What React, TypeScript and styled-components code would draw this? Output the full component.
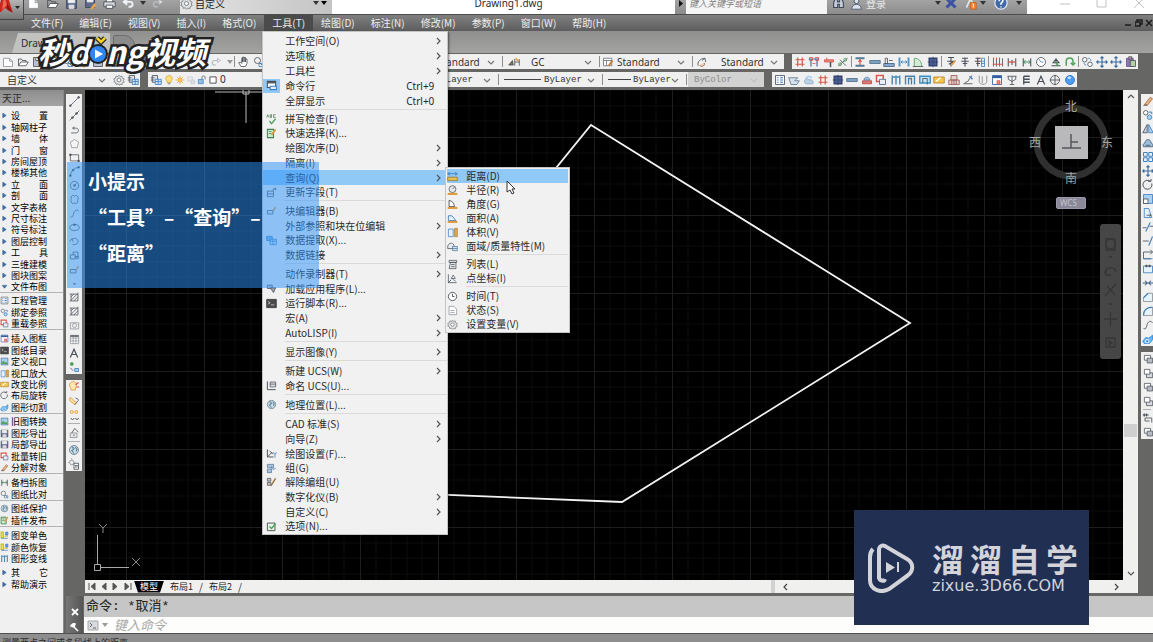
import React from "react";
import styled, { createGlobalStyle, css } from "styled-components";

const sans = `"Noto Sans", "Noto Sans CJK SC", sans-serif`;
const cjk = `"Noto Sans CJK SC", sans-serif`;
const mono = `"Liberation Mono", "Noto Sans CJK SC", monospace`;

const GlobalStyle = createGlobalStyle`
  * { box-sizing: border-box; }
  body { margin: 0; overflow: hidden; background: #666664; font-family: ${cjk}; font-size: 10px; color: #2c2c2c; }
  button, input, select { font: inherit; color: inherit; margin: 0; padding: 0; border: 0; background: none; border-radius: 0; outline: 0; }
  ul { list-style: none; margin: 0; padding: 0; }
  svg { display: block; }
`;

/* ---------- icons ---------- */

type Stroke = [d: string, stroke: string, fill?: string, width?: number];

const K = "#4a5058";
const G = "#8b9096";
const R = "#d8564c";
const B = "#3f7fc0";
const L = "#a9d0f0";
const O = "#e09a3e";
const N = "#4fa05a";

const glyphs: Record<string, Stroke[]> = {
  newDoc: [["M2 3h8l4 4v7H2z", G, "#fff"], ["M10 3v4h4", G]],
  open: [["M2 13V4h4l1 2h5v2", K], ["M2 13l3-5h10l-3 5z", K, "#fff"]],
  save: [["M2 2h12v12H2z", "#39415c", "#5c6a90"], ["M4 2h8v5H4z", "#eee", "#eee"], ["M5 10h6v4H5z", "#ddd", "#ddd"]],
  saveAs: [["M2 2h11v11H2z", "#39415c", "#5c6a90"], ["M4 2h7v4H4z", "#eee", "#eee"], ["M8 14l5-6 2 2-5 5z", O, "#f2b25c"]],
  print: [["M4 6V2h8v4", K, "#fff"], ["M1 6h14v6H1z", K, "#d8dbe0"], ["M4 10h8v4H4z", K, "#fff"]],
  undo: [["M2 6h8c4 0 4 6 0 6H8", "#eef1f6", undefined, 2.4], ["M6 2L1 6l5 4z", "#eef1f6", "#eef1f6"]],
  redo: [["M14 6H6c-4 0-4 6 0 6h2", "#b8bcc2", undefined, 1.6], ["M10 3l4 3-4 3z", "#b8bcc2", "#e4e6e8"]],
  gear: [["M8 1.5l1.5 2 2.5-.7.6 2.6 2.4 1-1.2 2.2 1.2 2.2-2.4 1-.6 2.6-2.5-.7L8 15l-1.5-1.800-2.500.7-.6-2.600-2.400-1L2.200 8.600 1 6.400l2.400-1L4 2.800l2.500.7z", "#7b7f84", "#e2e3e4"], ["M5.500 8a2.500 2.500 0 105 0 2.500 2.500 0 10-5 0", "#70757a", "#fff"]],
  hand: [["M4 14l-3-5 2-1 2 2V3h1v5V1.500h2V8V2h2v6V4h2v6l-2 4z", K, "#fff"]],
  zoomWin: [["M2 6a4 4 0 108 0 4 4 0 10-8 0M9 9l5 5", K], ["M8 10h6v4H8z", B]],
  floppy: [["M2 2h12v12H2z", K, "#b6bfd0"], ["M5 2h6v4H5z", K, "#fff"]],
  bulb: [["M5 10C1 6 3 1 8 1s7 5 3 9v2H5z", "#c99b22", "#ffe07a"], ["M6 14h4", K]],
  sun: [["M4.500 8a3.500 3.500 0 107 0 3.500 3.500 0 10-7 0", "#e0a030", "#ffc650"], ["M8 1v2M8 13v2M1 8h2M13 8h2M3 3l1.500 1.500M11.500 11.500L13 13M13 3l-1.500 1.500M3 13l1.500-1.500", "#d9962a"]],
  freeze: [["M3 3h7v7H3z", "#c3c8cc", "#e8ebee"], ["M8 8h6v6H8z", "#c3c8cc", "#dadde0"]],
  lock: [["M2 7h8v7H2z", B, "#8fbce4"], ["M8 7V3c0-2 5-2 5 0v4", K]],
  swatch: [["M3 3h10v10H3z", K, "#fff", 1.500]],
  layers: [["M3 2h7v9H3zM1 5h5M1 8h5", K, "#dfe5ee"], ["M7 7h8v7H7zM7 10h8M11 7v7", B, "#cfe2f5"]],
  dimStyle: [["M1 12l5-6 1 6zM9 4v9M15 4v9M9 8h6", K, "#8a6a4a"], ["M10 3l4 4", O, undefined, 2]],
  tableStyle: [["M2 3h11v10H2zM2 6h11M6 6v7", "#6d727a", "#fff"], ["M9 13l5-7", "#c47a35", undefined, 2.500]],
  leader: [["M3 13c-2-5 3-10 9-10M8 6l4-3 1 5", K], ["M5 12a3 3 0 106-3", "#a5653a", "#f1d1b8"]],
  grid: [["M5 2v12M11 2v12M2 5h12M2 11h12", R, undefined, 1.600]],
  gridT: [["M4 4v10M12 4v10M1 4h14", "#4c6f98", undefined, 1.600], ["M2 2h4v4H2zM10 2h4v4h-4zM6 10h4", R]],
  tBeam: [["M2 5h12v3H2z", R, "#e58b84"], ["M10 8v7", K, undefined, 2], ["M5 2v4", R]],
  axes: [["M2 13L14 3M4 5l8 8", K], ["M2 11a2 2 0 104 0 2 2 0 10-4 0M9 5a2 2 0 104 0 2 2 0 10-4 0", N]],
  iBeam: [["M2 3h12M2 13h12", "#4f7b96", undefined, 2.500], ["M8 4v8M6 8l2-3 2 3", R, undefined, 1.600]],
  wall: [["M1 6h14v4H1z", "#50708e", "#7da0bf"]],
  wallL: [["M1 10h14v4H1z", "#40638a", "#86a9cb"], ["M3 3h3v7H3zM8 6h5", K]],
  wallH: [["M2 2v12M14 2v12", "#4e94c0", "#fff", 2.500], ["M4 8h8M6 6L4 8l2 2M10 6l2 2-2 2", B]],
  arcDoor: [["M3 14V3c6 0 10 4 10 11", N, "#d3ead6"], ["M1 14h14", K]],
  column: [["M3 3h10v10H3z", "#35446e", "#4a5f96", 2], ["M8 1v14M1 8h14", "#35446e"]],
  textA: [["M4 2h8M8 2v12M3 7h10M5 11l6-3", K, undefined, 1.400], ["M9 12l5-6", O, undefined, 2]],
  textB: [["M4 3h8M8 2v12M3 7h10M5 10h6", K, undefined, 1.500]],
  textC: [["M2 3h7M5 2v12M1 7h8M3 10h5", K, undefined, 1.500], ["M10 3h4v11h-4zM10 7h4M10 10h4", B]],
  dimIcon: [["M2 3v11M6 3v11M10 3v11M14 3v11", K], ["M1 11h14M2 2v3M6 2v3M10 2v3", R, undefined, 1.500]],
  dimIconB: [["M3 3v11M13 3v11M8 5v7", K, undefined, 1.400], ["M3 8h10", R, undefined, 1.800]],
  dimIconC: [["M3 3v11M13 3v11", K, undefined, 1.400], ["M3 8h10M6 6l-3 2 3 2M10 6l3 2-3 2", "#40815a", undefined, 1.200]],
  dial: [["M2 8a6 6 0 1012 0 6 6 0 10-12 0", K, "#fff"], ["M8 8L5 4M8 8h3", B]],
  angle: [["M2 13h12M8 3v5M4 9l4-5 4 5z", K, "#c9d8e8", 1.400], ["M8 9l3 4", N, undefined, 2]],
  loop: [["M3 13V7c0-6 9-6 9 0v3M9 9l3 3 3-3", N, undefined, 2]],
  nodes: [["M2 5a3 3 0 106 0 3 3 0 10-6 0M9 11a3 3 0 106 0 3 3 0 10-6 0", K, "#fff"], ["M9 3c4 0 4 2 4 4M7 12C4 12 4 10 4 9", B]],
  move: [["M8 1v14M1 8h14M6 3l2-2 2 2M6 13l2 2 2-2M3 6L1 8l2 2M13 6l2 2-2 2", "#3d6d9e", undefined, 1.500]],
  paste: [["M2 3h9v11H2z", "#70539a", "#8b75ad"], ["M7 6h7v8H7z", K, "#b2d0a4"], ["M5 1h4v3H5z", K, "#caa"]],
  list: [["M2 2h12v12H2z", K, "#fff"], ["M4 5h2M8 5h4M4 8h2M8 8h4M4 11h2M8 11h4", B, undefined, 1.500]],
  roof: [["M1 5h12l-4 4h6l-3 5H4z", "#5b7895", "#d4e0ea"]],
  clouds: [["M2 10c0-4 5-5 6-2 4-1 7 2 5 5H5c-2 0-3-1-3-3z", "#88a9c4", "#bcd3e6"], ["M3 6l4-3 5 2", L, undefined, 2]],
  ball: [["M2 8a6 6 0 1012 0 6 6 0 10-12 0", "#2b6fc0", "#4d9df0"], ["M5 5c2-2 4-1 4 0s-3 2-4 0", "#d6ecff", "#d6ecff"]],
  redBox: [["M2 9h12v4H2z", "#c0463e", "#e07a72"], ["M4 8c0-5 7-5 8 0z", "#5f7fa8", "#a8c2de"]],
  redStack: [["M2 2h9v8H2z", R, "#fff", 2], ["M6 7h8v7H6z", "#4b5f85", "#e8edf6"]],
  bars: [["M3 2v12M8 2v12M13 2v12M3 4h10", "#4c8cb5", "#cfe4f1", 2]],
  frame: [["M2 14V3h12v11M6 14V6h4v8", "#4c7fa5", undefined, 1.800]],
  frameB: [["M1 3h14v9H1z", "#3a91c8", "#bfe2f5", 1.800], ["M5 12V6h6v8", K]],
  folderY: [["M1 4h14v8H1z", "#b08128", "#f7c64a"], ["M4 10l6-5", "#fff", undefined, 2]],
  balcony: [["M4 2h8v6H4zM1 8h14v6H1zM5 8v6M8 8v6M11 8v6", "#9a5a56", "#e6d2d0"]],
  steps: [["M2 13h12M4 13c0-4 4-1 5-5s3-2 4-6", K], ["M10 3l4 4", B, undefined, 2]],
  pen: [["M3 2v8c0 5 10 5 10 0V2M7 3v9", "#82868c"]],
  cal: [["M2 2h12v12H2z", "#2f5fa0", "#fff"], ["M2 4h12", "#2f5fa0", undefined, 3], ["M8 9h4v4H8z", R, "#e58b84"]],
  tree: [["M2 3h12M8 3v11M3 7l5 3 5-3M5 14h6M3 3v4M13 3v4", K]],
  para: [["M5 3h8M5 7h8M5 11h8M5 3v11", K, undefined, 1.800]],
  letterA: [["M3 14L8 3l5 11M5 10h6", K, undefined, 1.600]],
  target: [["M2 8a6 6 0 1012 0 6 6 0 10-12 0M8 1v14M1 8h14", K]],
  line: [["M2 14L14 2", K], ["M1 13h2v2H1zM13 1h2v2h-2z", K, K]],
  xline: [["M1 15L15 1", K], ["M4 10h2v2H4zM10 4h2v2h-2z", K, K]],
  pline: [["M3 13h7c5 0 5-7 0-7H6M8 4L5 6l3 2", K]],
  polygon: [["M8 2l6 4-2 8H4L2 6z", G, "#f4f4f4"]],
  rect: [["M2 4h12v9H2z", K], ["M1 3h2v2H1zM13 12h2v2h-2z", K, K]],
  arc: [["M2 14C3 7 7 3 14 2", K], ["M1 13h2v2H1zM13 1h2v2h-2zM5 5h2v2H5z", K, K]],
  circle: [["M2 8a6 6 0 1012 0 6 6 0 10-12 0M8 8l3-3", K], ["M7 7h2v2H7z", K, K]],
  cloud: [["M4 3c2-2 3 0 4 0s3-2 4 0 2 3 1 5 1 3-1 5-3 0-4 0-3 2-4 0-2-3-1-5-1-3 1-5z", K]],
  spline: [["M2 12c3 4 4-2 5-5s4-6 7-2", K]],
  ellipse: [["M1 8c0-6 14-6 14 0s-14 6-14 0", K], ["M7 3h2v2H7z", K, K]],
  earc: [["M4 5c5-4 10 0 9 4s-6 4-8 3M1 8l3-4 2 4", K]],
  block: [["M2 7h7v6H2zM6 7V3h7v7H9", K], ["M10 11a2 2 0 104 0 2 2 0 10-4 0", K]],
  dot: [["M7 8h2v1H7z", K, K]],
  hatch: [["M3 3h10v10H3zM3 7l4-4M3 12l9-9M7 13l6-6M1 3h2M1 13h2M13 1v2", K]],
  region: [["M2 4h12v9H2z", G, "#f2f2f2"], ["M5 8a3 3 0 106 0 3 3 0 10-6 0", G]],
  table: [["M2 2h12v12H2zM2 6h12M2 10h12M6 2v12M10 2v12", G, "#fff"], ["M2 3h12", K, undefined, 2]],
  mix: [["M3 4a2 2 0 104 0 2 2 0 10-4 0", N, N], ["M9 10h5v4H9z", B, L], ["M3 9l4 4", K]],
  bulbB: [["M4 10C0 5 3 1 7 1s6 4 3 8v3H4z", O, "#ffe7b0"], ["M10 5l4-3M11 8h4", R, undefined, 1.500]],
  bulbC: [["M3 3l8 7-2 3-7-6z", O, "#ffe0a0"], ["M9 13l5-6M10 4l4 2", K]],
  bulbD: [["M3 4a2 2 0 104 0 2 2 0 10-4 0M9 4a2 2 0 104 0 2 2 0 10-4 0", O, "#ffe7b0"], ["M4 12a2 2 0 104 0M10 12a2 2 0 104 0", K]],
  lockG: [["M3 8h9v6H3z", G, "#e6e6e6"], ["M5 8L9 2l5 5M8 10v2", K]],
  globe: [["M2 8a6 6 0 1012 0 6 6 0 10-12 0", "#637888", "#c8dde8"], ["M5 4c4 0 4 4 1 4s2 4 2 5M10 4l2 3-1 3", "#4a6a7c", "#8cb0c4"]],
  sunDoc: [["M2 6a3 3 0 106 0 3 3 0 10-6 0M5 0v2M0 6h1", G], ["M8 7h6v8H8zM9 10h4M9 12h4", K, "#fff"]],
  erase: [["M3 13l8-10 3 2-7 9z", "#a96b40", "#e7b184"], ["M2 14l5-1", K]],
  copy: [["M2 5a3 3 0 106 0 3 3 0 10-6 0", K, "#fff"], ["M7 11a3 3 0 106 0 3 3 0 10-6 0M9 4h4v3", B, L]],
  mirror: [["M7 2v11H1z", K, "#c4d3df"], ["M9 2v11h6z", B, L]],
  offset: [["M2 13c-2-4 2-5 2-5 0-6 8-6 8 0 0 0 4 1 2 5z", "#3f5a78", "#9ec0de"], ["M5 11h6", K]],
  array: [["M2 2h5v5H2zM9 2h5v5H9zM2 9h5v5H2zM9 9h5v5H9z", B, "#e5f2fc", 1.300]],
  rotate: [["M11 3a6 6 0 102 3M8 3h4V0", K, undefined, 1.300]],
  scale: [["M2 2h12v12H2z", B, L], ["M2 8h6v6H2z", K, "#fff"]],
  stretch: [["M3 2h6l4 12H3z", B, "#e4f2fc"], ["M6 11h6M10 9l2 2-2 2", K]],
  trim: [["M1 9h5M10 7h5", K], ["M5 14l6-12", B, undefined, 1.500]],
  extend: [["M1 8h8", K], ["M9 14l5-12", B, undefined, 1.500]],
  brk: [["M14 4H2v9h10M11 1l3 3-3 3", K], ["M2 13h12", B]],
  brk2: [["M6 4H2v9h12V4h-4", B, "#e4f2fc"], ["M5 3h2v2H5zM9 3h2v2H9z", K, K]],
  join: [["M1 8h14M4 5l3 3-3 3M12 5L9 8l3 3", "#3b5f82", undefined, 1.400]],
  chamfer: [["M2 14V9l6-6h6v11z", G, "#e4f2fc"], ["M2 9l6-6", B, undefined, 1.500]],
  fillet: [["M2 14c0-7 4-11 12-11v11z", G, "#e4f2fc"], ["M2 14c0-7 4-11 12-11", B, undefined, 1.500]],
  explode: [["M1 11l4-5 4 1 5-4v6l-4 5H3z", "#2e86d2", "#6fb6f0"], ["M5 9h4v4H5z", "#fff", "#2e86d2"]],
  order: [["M2 2h9v7H2z", K, "#fff"], ["M6 6h8v7H6z", K, "#b8bcc2"]],
  orderB: [["M5 7h9v7H5z", K, "#d5d8dc"], ["M2 2h8v7H2z", K, "#fff"]],
  dimOrder: [["M1 4h8M3 2v4M6 2v4", K, undefined, 1.600], ["M4 8h9v6M4 8v4h6", K]],
  cmd: [["M2 2h12v9H2z", K, "#fff", 1.500], ["M2 4h12", K, undefined, 2], ["M6 9h9v5H6z", B, "#e2effa", 1.500]],
  abc: [["M1 5l1.500-4L4 5M6 1v4h2V1zM14 1h-3v4h3", "#4c7c55"], ["M5 10l3 4 6-7", N, undefined, 2]],
  qsel: [["M2 2h9v12H2z", "#3f8050", "#cfe8d2", 1.500], ["M4 5h4M4 8h4", "#3f8050"], ["M8 10l6-8", O, undefined, 2.500]],
  field: [["M2 6h9v8H2zM2 10h9", K, "#e8edf2"], ["M9 5l5-3M11 2h3v3", K]],
  blockEd: [["M2 8h8v5H2z", K, "#e8edf2"], ["M10 9l4-6", O, undefined, 2]],
  extract: [["M1 2h8v6H1z", B, "#7db6e8"], ["M6 6h9v8H6zM6 9h9M10 6v8", B, "#d7eafa"]],
  app: [["M2 3h7v5H2z", K, "#c5cbd0"], ["M6 7h8l-3 7z", K, "#9aa0a6"]],
  script: [["M1 2h14v12H1z", "#333", "#4a4a4a"], ["M3 5l3 2-3 2M7 10h5", "#ddd"]],
  ucs: [["M2 2v12h12", K, undefined, 1.400], ["M6 3h8v7H6zM6 6h8", K, "#dfe3e8"]],
  drafting: [["M2 2v11h9M2 13l7-7M5 4l5 5", K, undefined, 1.400], ["M11 6a2 3 0 104 0M13 9v5", B]],
  group: [["M2 2h9v5H2zM2 9h6v5H2z", "#56779a", "#a9c4dc"], ["M8 5a3 3 0 106 2", B]],
  ungroup: [["M2 2h5v4H2zM2 8h5v4H2z", K, "#c6c6c6"], ["M7 13l7-11", "#9d7440", undefined, 2.200]],
  options: [["M2 3h11v11H2z", "#4d5a52", "#e7f2e8", 1.400], ["M5 8l3 3 6-7", N, undefined, 2]],
  dist: [["M1 9h14v5H1z", "#94752f", "#e7bd4d"], ["M2 4h12M4 2L1 4l3 2M12 2l3 2-3 2", B, undefined, 1.400]],
  radius: [["M3 6a5 5 0 1010 0 5 5 0 10-10 0M8 6l3-3", K, "#e5eaf0"], ["M1 13h14", O, undefined, 3]],
  angleM: [["M3 11V2c5 1 7 4 8 9z", K, "#fff", 1.300], ["M1 13h14", O, undefined, 3]],
  area: [["M2 11V4h5l6 7z", B, "#e6f1fb", 1.300], ["M1 13h14", O, undefined, 3]],
  volume: [["M2 3h7v11H2z", B, "#e6f1fb"], ["M11 2h4v12h-4z", "#a7803b", "#e7a54d"]],
  mass: [["M1 9c0-6 7-8 9-3v5H1z", K, "#e6edf4"], ["M8 8h7v6H8zM8 11h7", "#557ca2", "#d3e3f2"]],
  listM: [["M3 2h11v3H3zM5 5h8v9H3z", K, "#e6e8ec"], ["M6 8h5M6 11h5", K]],
  idPoint: [["M2 2v12h12M2 14l4-4M6 8l3-5 3 5z", K], ["M8 9l5 3", B]],
  clock: [["M2 8a6 6 0 1012 0 6 6 0 10-12 0M8 4v4h3", K, "#fff", 1.300]],
  doc: [["M3 2h7l4 4v8H3z", G, "#fff"], ["M5 8h6M5 11h6", G]],
  user: [["M5 5a3 3 0 106 0 3 3 0 10-6 0M2 15c0-8 12-8 12 0z", "#4a5468", "#dbe2ee"]],
  binoc: [["M2 13V7l2-5h2l1 4h2l1-4h2l2 5v6H9V9H7v4z", "#3c4658", "#c3cad8", 1.300]],
  exchange: [["M2 2l12 12M14 2L2 14", "#3c52a0", undefined, 4]],
  a360: [["M3 13L8 2l5 11", "#dfe6f2", undefined, 2], ["M8 7h7v8H8z", "#c8641e", "#f08a34"], ["M11.500 8v5", "#fff"]],
  help: [["M1 8a7 7 0 1014 0 7 7 0 10-14 0", "#dfe7f4", "#3f68a6", 1.400], ["M6 6c0-4 5-3 4 0L8 8.500V10M8 12v1", "#fff", undefined, 1.800]],
  picture: [["M2 2h12v12H2z", "#3a6a9a", "#a7d0ef"], ["M2 12l4-5 3 4 2-2 3 4", N, N]],
  palette: [["M2 2h4v10H2zM8 9h6", "#c4c12e", "#eee84a", 2], ["M10 2h4v5h-4zM2 13h12", "#2e6fc0", "#6aa4e8"]],
  bullet: [["M5 4l6 4-6 4z", "#2d5a8c", "#3d74ad"]],
  bulletDown: [["M4 6h8l-4 5z", "#2d5a8c", "#3d74ad"]],
};

const Svg = styled.svg<{ $s: number }>`
  width: ${(p) => p.$s}px;
  height: ${(p) => p.$s}px;
  flex: none;
`;

function Icon({ name, size = 12 }: { name: string; size?: number }) {
  return (
    <Svg $s={size} viewBox="0 0 16 16" aria-hidden="true">
      {glyphs[name].map(([d, stroke, fill, width], i) => (
        <path key={i} d={d} stroke={stroke} fill={fill ?? "none"} strokeWidth={width ?? 1.1} />
      ))}
    </Svg>
  );
}

const IconButton = styled.button<{ $w?: number; $h?: number }>`
  display: flex;
  align-items: center;
  justify-content: center;
  flex: none;
  width: ${(p) => p.$w ?? 15}px;
  height: ${(p) => p.$h ?? 15}px;
`;

const ToolIcon = ({ name, w, h, size }: { name: string; w?: number; h?: number; size?: number }) => (
  <IconButton type="button" aria-label={name} $w={w} $h={h}>
    <Icon name={name} size={size} />
  </IconButton>
);

function Chevron({ dir = "down", color = "#707070" }: { dir?: "down" | "up" | "left" | "right"; color?: string }) {
  const d = { down: "M1 3l3 3 3-3", up: "M1 5l3-3 3 3", left: "M5 1L2 4l3 3", right: "M3 1l3 3-3 3" }[dir];
  return (
    <Svg $s={8} viewBox="0 0 8 8" aria-hidden="true">
      <path d={d} fill="none" stroke={color} strokeWidth={1.2} />
    </Svg>
  );
}

const Caret = styled.span<{ $c?: string }>`
  flex: none;
  width: 0;
  height: 0;
  border: 3px solid transparent;
  border-bottom: 0;
  border-top: 4px solid ${(p) => p.$c ?? "#333"};
`;

/* ---------- page frame ---------- */

const Page = styled.div`
  position: relative;
  display: flex;
  flex-direction: column;
  height: 100vh;
  overflow: hidden;
  background: #666664;
`;

const TitleBar = styled.header`
  display: flex;
  align-items: flex-end;
  flex: none;
  height: 15px;
  overflow: hidden;
  border-bottom: 1px solid #4c4c4c;
  background: linear-gradient(#a3a3a3, #8c8c8c);
`;

const TitleGroup = styled.div<{ $w?: number; $grow?: boolean; $bg?: string; $gap?: number; $pl?: number }>`
  display: flex;
  align-items: center;
  flex: ${(p) => (p.$grow ? "1 1 0" : "none")};
  width: ${(p) => (p.$w ? `${p.$w}px` : "auto")};
  height: 22px;
  gap: ${(p) => p.$gap ?? 0}px;
  padding-left: ${(p) => p.$pl ?? 0}px;
  background: ${(p) => p.$bg ?? "transparent"};
`;

const DocTitle = styled.h1`
  margin: 0;
  flex: 1;
  text-align: center;
  font: 400 10px/14px ${sans};
`;

const WorkspaceSelect = styled.select`
  appearance: none;
  width: 116px;
  height: 14px;
  color: #222;
`;

const SearchBox = styled.input`
  width: 141px;
  height: 22px;
  padding-left: 3px;
  background: #f5f5f5;
  font-style: italic;
  font-size: 9px;
  &::placeholder { color: #808080; opacity: 1; }
`;

const LoginButton = styled.button`
  color: #e8e8e8;
  width: 68px;
  text-align: left;
`;

const AppLogo = styled.button`
  position: absolute;
  z-index: 6;
  top: 0;
  left: 0;
  width: 24px;
  height: 20px;
  background: linear-gradient(#b4b4b4, #777);
  border-right: 1px solid #444;
  border-bottom: 1px solid #444;
`;

const MenuBar = styled.nav`
  position: relative;
  z-index: 5;
  flex: none;
  display: flex;
  height: 16px;
  padding-left: 23px;
  background: linear-gradient(#808080, #5d5d5d);
`;

const MenuList = styled.ul`
  display: flex;
  flex: 1;
`;

const MenuEntry = styled.li`
  position: relative;
`;

const MenuTop = styled.button<{ $open?: boolean }>`
  height: 16px;
  padding: 0 8px;
  color: #ededed;
  line-height: 16px;
  white-space: nowrap;
  background: ${(p) => (p.$open ? "#4b4b4b" : "none")};
`;

const WindowButtons = styled.div<{ $gap: number }>`
  display: flex;
  align-items: center;
  gap: ${(p) => p.$gap}px;
`;

const panel = css`
  position: absolute;
  background: #f1f1f1;
  border: 1px solid #c4c4c4;
  color: #2a2a2a;
`;

const Menu = styled.ul`
  ${panel}
  top: 16px;
  left: -2px;
  width: 186px;
  padding: 1px 0;
  box-shadow: 1px 1px 2px rgba(0, 0, 0, 0.5);
`;

const SubMenu = styled.ul`
  ${panel}
  top: -3px;
  left: 182px;
  width: 125px;
  padding: 1px;
`;

const MenuItem = styled.li<{ $tight?: boolean }>`
  position: relative;
  height: ${(p) => (p.$tight ? 14 : 15)}px;
`;

const MenuButton = styled.button<{ $active?: boolean; $icons: number }>`
  display: grid;
  grid-template-columns: ${(p) => p.$icons}px 1fr auto;
  align-items: center;
  width: 100%;
  height: 100%;
  padding: 0 5px 0 0;
  text-align: left;
  line-height: 14px;
  white-space: nowrap;
  background: ${(p) => (p.$active ? "#90c8f6" : "none")};
`;

const IconCell = styled.span<{ $on?: boolean; $w: number }>`
  display: flex;
  align-items: center;
  justify-content: center;
  width: ${(p) => p.$w}px;
  height: 14px;
  background: ${(p) => (p.$on ? "#90c8f6" : "none")};
`;

const Shortcut = styled.kbd`
  font-family: ${sans};
  font-size: 10px;
  padding-right: 8px;
`;

const Rule = styled.li<{ $left: number }>`
  height: 4px;
  padding-top: 1px;
  &::after {
    content: "";
    display: block;
    height: 1px;
    margin-left: ${(p) => p.$left}px;
    background: #dadada;
  }
`;

type Entry = { t: string; icon?: string; sub?: boolean; tight?: boolean; key?: string; on?: boolean; active?: boolean } | null;

const toolsMenu: Entry[] = [
  { t: "工作空间(O)", sub: true },
  { t: "选项板", sub: true },
  { t: "工具栏", sub: true },
  { t: "命令行", icon: "cmd", key: "Ctrl+9", on: true },
  { t: "全屏显示", key: "Ctrl+0" },
  null,
  { t: "拼写检查(E)", icon: "abc", tight: true },
  { t: "快速选择(K)...", icon: "qsel", tight: true },
  { t: "绘图次序(D)", sub: true },
  { t: "隔离(I)", sub: true },
  { t: "查询(Q)", sub: true, active: true },
  { t: "更新字段(T)", icon: "field", tight: true },
  null,
  { t: "块编辑器(B)", icon: "blockEd" },
  { t: "外部参照和块在位编辑", sub: true },
  { t: "数据提取(X)...", icon: "extract", tight: true },
  { t: "数据链接", sub: true },
  null,
  { t: "动作录制器(T)", sub: true },
  { t: "加载应用程序(L)...", icon: "app" },
  { t: "运行脚本(R)...", icon: "script", tight: true },
  { t: "宏(A)", sub: true },
  { t: "AutoLISP(I)", sub: true },
  null,
  { t: "显示图像(Y)", sub: true },
  null,
  { t: "新建 UCS(W)", sub: true },
  { t: "命名 UCS(U)...", icon: "ucs" },
  null,
  { t: "地理位置(L)...", icon: "globe" },
  null,
  { t: "CAD 标准(S)", sub: true },
  { t: "向导(Z)", sub: true },
  { t: "绘图设置(F)...", icon: "drafting" },
  { t: "组(G)", icon: "group", tight: true },
  { t: "解除编组(U)", icon: "ungroup", tight: true },
  { t: "数字化仪(B)", sub: true },
  { t: "自定义(C)", sub: true },
  { t: "选项(N)...", icon: "options", tight: true },
];

const inquiryMenu: Entry[] = [
  { t: "距离(D)", icon: "dist", active: true },
  { t: "半径(R)", icon: "radius" },
  { t: "角度(G)", icon: "angleM" },
  { t: "面积(A)", icon: "area" },
  { t: "体积(V)", icon: "volume" },
  { t: "面域/质量特性(M)", icon: "mass" },
  null,
  { t: "列表(L)", icon: "listM" },
  { t: "点坐标(I)", icon: "idPoint" },
  null,
  { t: "时间(T)", icon: "clock" },
  { t: "状态(S)", icon: "doc" },
  { t: "设置变量(V)", icon: "gear" },
];

function Items({ list, tight }: { list: Entry[]; tight?: boolean }) {
  const icons = tight ? 19 : 22;
  return (
    <>
      {list.map((e, i) =>
        e === null ? (
          <Rule key={i} $left={icons} />
        ) : (
          <MenuItem key={i} $tight={tight || e.tight}>
            <MenuButton type="button" $active={e.active} $icons={icons}>
              <IconCell $on={e.on} $w={tight ? 11 : 17}>{e.icon && <Icon name={e.icon} size={11} />}</IconCell>
              <span>{e.t}</span>
              {e.key && <Shortcut>{e.key}</Shortcut>}
              {e.sub && <Chevron dir="right" color="#555" />}
            </MenuButton>
            {e.sub && e.active && (
              <SubMenu>
                <Items list={inquiryMenu} tight />
              </SubMenu>
            )}
          </MenuItem>
        )
      )}
    </>
  );
}

/* ---------- file tabs and toolbars ---------- */

const FileTabs = styled.div`
  flex: none;
  display: flex;
  align-items: flex-end;
  height: 22px;
  padding-left: 12px;
  background: linear-gradient(#8f8f8f, #a3a3a1);
`;

const FileTab = styled.button`
  width: 98px;
  height: 20px;
  padding-left: 9px;
  text-align: left;
  font-family: ${sans};
  background: #c2c2c0;
  clip-path: polygon(6px 0, 100% 0, 100% 100%, 0 100%);
`;

const AddTab = styled.button`
  width: 22px;
  height: 16px;
  margin: 0 0 2px 3px;
  border: 1px solid #6c6c6c;
  border-radius: 2px 12px 6px 2px;
  background: #8b8b8b;
`;

const Toolbars = styled.div`
  flex: none;
  display: flex;
  flex-direction: column;
  gap: 3px;
  padding: 1px 0 3px;
`;

const ToolRow = styled.div`
  display: flex;
  gap: 8px;
  height: 15px;
`;

const Strip = styled.div<{ $w?: number; $pl?: number }>`
  display: flex;
  align-items: center;
  flex: none;
  width: ${(p) => (p.$w ? `${p.$w}px` : "auto")};
  padding-left: ${(p) => p.$pl ?? 0}px;
  background: #f0f0f0;
`;

const DenseStrip = styled(Strip)`
  & > button:nth-child(even) {
    width: 14px;
  }
`;

const Divider = styled.span`
  flex: none;
  width: 1px;
  height: 11px;
  margin: 0 1px;
  background: #8d8d8d;
`;

const Push = styled.span`
  flex: 1;
`;

const SelectBox = styled.label<{ $w: number; $off?: boolean }>`
  display: grid;
  grid-template-columns: 1fr 14px;
  align-items: center;
  flex: none;
  width: ${(p) => p.$w}px;
  height: 15px;
  color: ${(p) => (p.$off ? "#8c8c8c" : "#333")};
  background: ${(p) => (p.$off ? "#d2d2d2" : "transparent")};
`;

const Native = styled.select<{ $pl: number; $mono?: boolean }>`
  appearance: none;
  grid-area: 1 / 1 / 2 / 3;
  width: 100%;
  height: 15px;
  padding-left: ${(p) => p.$pl}px;
  font-family: ${(p) => (p.$mono ? mono : sans)};
  font-size: ${(p) => (p.$mono ? 9 : 10)}px;
  opacity: 1;
`;

const SelectArrow = styled.span`
  grid-area: 1 / 2;
  pointer-events: none;
`;

const LineSample = styled.span<{ $w: number }>`
  grid-area: 1 / 1;
  width: ${(p) => p.$w}px;
  height: 1px;
  margin-left: 4px;
  background: #444;
`;

function Select({ w, value, pl = 4, monospace, off, line }: { w: number; value: string; pl?: number; monospace?: boolean; off?: boolean; line?: number }) {
  return (
    <SelectBox $w={w} $off={off}>
      {line && <LineSample $w={line} />}
      <Native $pl={pl} $mono={monospace} disabled={off} aria-label={value}>
        <option>{value}</option>
      </Native>
      <SelectArrow>
        <Chevron color={off ? "#c0c0c0" : "#777"} />
      </SelectArrow>
    </SelectBox>
  );
}

const LayerName = styled.span`
  font: 10px/15px ${sans};
  padding-left: 2px;
`;

const row1 = ["grid", "gridT", "tBeam", "axes", "|", "iBeam", "wall", "wallL", "wallH", "arcDoor", "column", "|", "textA", "textB", "textC", "|", "dimIcon", "dimIconB", "dimIconC", "dial", "angle", "loop", "|", "nodes", "move", "move", "paste"];
const row2 = ["list", "roof", "clouds", "grid", "column", "wall", "redBox", "redStack", "bars", "frame", "frameB", "folderY", "balcony", "steps", "pen", "cal", "tree", "para", "letterA", "target", "ball"];

/* ---------- workspace ---------- */

const Main = styled.main`
  flex: 1;
  min-height: 0;
  display: flex;
  gap: 2px;
`;

const SidePanel = styled.aside`
  flex: none;
  width: 64px;
  overflow: hidden;
  background: #f0f0f0;
  border-right: 1px solid #8a8a8a;
`;

const SideHead = styled.h2`
  margin: 0 0 4px;
  height: 16px;
  padding-left: 2px;
  font: 400 10px/16px ${cjk};
  background: linear-gradient(#8d8d8d, #a5a5a5);
`;

const SideGroup = styled.ul<{ $line?: boolean }>`
  margin-bottom: 3px;
  border-bottom: 1px solid ${(p) => (p.$line ? "#b4b4b4" : "transparent")};
  &:nth-of-type(odd) {
    margin-bottom: 2px;
  }
`;

const SideItem = styled.li`
  height: 11px;
  &:nth-child(5n + 2),
  &:nth-child(5n + 4) {
    height: 12px;
  }
`;

const SideButton = styled.button`
  display: grid;
  grid-template-columns: 11px 37px;
  align-items: center;
  height: 100%;
  font-size: 9px;
  line-height: 11px;
  color: #000;
  white-space: nowrap;
`;

const SideLabel = styled.span<{ $wide?: boolean }>`
  text-align: left;
  ${(p) => p.$wide && "text-align-last: justify;"}
`;

const sideGroups: { line?: boolean; items: [string, string][] }[] = [
  {
    line: true,
    items: ["设 置", "轴网柱子", "墙 体", "门 窗", "房间屋顶", "楼梯其他", "立 面", "剖 面", "文字表格", "尺寸标注", "符号标注", "图层控制", "工 具", "三维建模", "图块图案", "文件布图"].map(
      (t) => [t, t === "文件布图" ? "bulletDown" : "bullet"] as [string, string]
    ),
  },
  { line: true, items: [["工程管理", "list"], ["绑定参照", "copy"], ["重载参照", "redStack"]] },
  { line: true, items: [["插入图框", "cal"], ["图纸目录", "script"], ["定义视口", "picture"], ["视口放大", "volume"], ["改变比例", "folderY"], ["布局旋转", "rotate"], ["图形切割", "explode"]] },
  { line: true, items: [["旧图转换", "picture"], ["图形导出", "save"], ["局部导出", "save"], ["批量转旧", "redStack"], ["分解对象", "erase"]] },
  { line: true, items: [["备档拆图", "dimIconC"], ["图纸比对", "zoomWin"]] },
  { line: true, items: [["图纸保护", "globe"], ["插件发布", "qsel"]] },
  { items: [["图变单色", "palette"], ["颜色恢复", "palette"], ["图形变线", "bars"]] },
  { items: [["其 它", "bullet"], ["帮助演示", "bullet"]] },
];

const Work = styled.section`
  flex: 1;
  min-width: 0;
  display: flex;
  flex-direction: column;
  gap: 3px;
`;

const WorkRow = styled.div`
  flex: 1;
  min-height: 0;
  display: flex;
`;

const ToolColumn = styled.div<{ $w: number; $mr?: number; $ml?: number }>`
  flex: none;
  display: flex;
  flex-direction: column;
  gap: 6px;
  width: ${(p) => p.$w}px;
  margin-right: ${(p) => p.$mr ?? 0}px;
  margin-left: ${(p) => p.$ml ?? 0}px;
  padding-top: 4px;
  overflow: hidden;
`;

const ToolStack = styled.div`
  display: flex;
  flex-direction: column;
  background: #f0f0f0;
`;

const HLine = styled.span`
  height: 1px;
  margin: 1px 2px;
  background: #b0b0b0;
`;

const Viewport = styled.div`
  flex: 1;
  min-width: 0;
  display: grid;
  grid-template-columns: 1fr 15px;
  grid-template-rows: 1fr 13px;
  background: #f0f0ee;
`;

const Canvas = styled.div`
  position: relative;
  min-height: 0;
  overflow: hidden;
  background: #000;
`;

const Drawing = styled.svg`
  width: 100%;
  height: 100%;
`;

const Compass = styled.svg`
  position: absolute;
  top: 6px;
  right: 8px;
  width: 88px;
  height: 92px;
`;

const WcsButton = styled.button`
  position: absolute;
  top: 107px;
  right: 37px;
  width: 30px;
  height: 12px;
  padding-left: 3px;
  text-align: left;
  border: 1px solid #9c98ac;
  border-radius: 2px;
  background: #8b8899;
  color: #c4c4c8;
  font: 8px/10px ${sans};
`;

const NavBar = styled.div`
  position: absolute;
  top: 134px;
  right: 2px;
  width: 21px;
  height: 135px;
  padding: 10px 0;
  display: flex;
  flex-direction: column;
  align-items: center;
  justify-content: space-between;
  border-radius: 3px;
  background: #464646;
`;

const VScroll = styled.div`
  display: flex;
  flex-direction: column;
  align-items: center;
  justify-content: space-between;
  padding: 3px 0;
`;

const Thumb = styled.span`
  width: 13px;
  height: 13px;
  margin-top: 190px;
  background: #cfcfcf;
`;

const LayoutBar = styled.div`
  grid-column: 1 / 3;
  display: flex;
  align-items: center;
`;

const LayoutNav = styled.div`
  display: flex;
  gap: 3px;
  padding: 0 2px 0 2px;
`;

const LayoutTab = styled.button<{ $on?: boolean }>`
  height: 12px;
  padding: 0 6px;
  line-height: 12px;
  font-size: 9px;
  color: ${(p) => (p.$on ? "#fff" : "#222")};
  background: ${(p) => (p.$on ? "#000" : "none")};
  clip-path: ${(p) => (p.$on ? "polygon(0 0, 100% 0, calc(100% - 4px) 100%, 4px 100%)" : "none")};
`;

const HScroll = styled.div`
  width: 367px;
  height: 13px;
  display: flex;
  align-items: center;
  justify-content: space-between;
  padding: 0 18px 0 7px;
  border-left: 4px solid #d2d2d2;
`;

const CommandDock = styled.div`
  flex: none;
  display: flex;
  gap: 1px;
  height: 37px;
`;

const DockHandle = styled.div`
  flex: none;
  display: flex;
  flex-direction: column;
  align-items: center;
  justify-content: flex-end;
  gap: 7px;
  width: 17px;
  padding-bottom: 1px;
  background: linear-gradient(90deg, #777, #555);
`;

const CommandPane = styled.div`
  flex: 1;
  display: flex;
  flex-direction: column;
`;

const History = styled.output`
  display: block;
  height: 21px;
  padding-left: 2px;
  background: #c6c6c6;
  font: 13px/21px ${mono};
  color: #222;
`;

const Prompt = styled.label`
  display: flex;
  align-items: center;
  gap: 3px;
  height: 16px;
  padding-left: 3px;
  background: #fdfdfb;
`;

const PromptInput = styled.input`
  flex: 1;
  height: 16px;
  padding-left: 3px;
  font: italic 13px/16px ${cjk};
  &::placeholder { color: #a8a8a8; opacity: 1; }
`;

const StatusBar = styled.footer`
  flex: none;
  height: 9px;
  padding: 2px 0 0 2px;
  overflow: hidden;
  border-top: 1px solid #4e4e4e;
  background: #8e8e8e;
  font-size: 9px;
  line-height: 13px;
`;

/* ---------- overlays ---------- */

const Tip = styled.section`
  position: absolute;
  z-index: 7;
  top: 162px;
  left: 67px;
  width: 252px;
  height: 126px;
  padding: 1px 0 0 21px;
  background: rgba(45, 148, 250, 0.51);
  color: #fff;
  font: 700 19px/36px ${cjk};
  white-space: nowrap;
`;

const TipLine = styled.p`
  margin: 0;
`;

const Brand = styled.div`
  position: absolute;
  z-index: 7;
  top: 31px;
  left: 38px;
  display: flex;
  align-items: center;
  height: 40px;
  color: #fff;
  font: italic 700 31px/40px ${cjk};
  -webkit-text-stroke: 5px #222;
  paint-order: stroke fill;
`;

const BrandBall = styled.svg`
  width: 17px;
  height: 36px;
  overflow: visible;
`;

const Badge = styled.a`
  position: absolute;
  z-index: 7;
  right: 64px;
  bottom: 17px;
  display: flex;
  align-items: center;
  gap: 17px;
  width: 235px;
  height: 115px;
  padding-left: 13px;
  background: #212f53;
  color: #d3d4d9;
  text-decoration: none;
`;

const BadgeText = styled.span`
  display: flex;
  flex-direction: column;
`;

const BadgeName = styled.strong`
  display: flex;
  gap: 6px;
  font: 700 32px/36px ${cjk};
`;

const BadgeUrl = styled.span`
  font: 400 16px/20px "DejaVu Sans", sans-serif;
`;

const Pointer = styled.svg`
  position: absolute;
  z-index: 8;
  top: 180px;
  left: 506px;
  width: 10px;
  height: 16px;
`;

const menus = ["文件(F)", "编辑(E)", "视图(V)", "插入(I)", "格式(O)", "工具(T)", "绘图(D)", "标注(N)", "修改(M)", "参数(P)", "窗口(W)", "帮助(H)"];
const drawTools = ["line", "xline", "pline", "polygon", "rect", "arc", "circle", "cloud", "spline", "ellipse", "earc", "block", "blockEd", "dot", "hatch", "hatch", "region", "table"];
const editTools = ["erase", "copy", "mirror", "offset", "array", "move", "rotate", "scale", "stretch", "trim", "extend", "brk", "brk2", "join", "chamfer", "fillet", "spline", "explode"];

export default function App() {
  return (
    <Page lang="zh-CN">
      <GlobalStyle />
      <AppLogo type="button" aria-label="AutoCAD">
        <svg width="23" height="19" viewBox="0 0 23 19">
          <path d="M-3 13L3-6h4l6 19-4-2-4-3-4 4z" fill="#c9281e" />
          <path d="M4-4l3 9-5 5z" fill="#ef6a54" />
          <path d="M7 3l5 9-5-3z" fill="#8d1510" />
          <path d="M15 6h5l-2.500 3z" fill="#222" />
        </svg>
      </AppLogo>
      <TitleBar>
        <TitleGroup $w={180} $pl={26} $gap={4}>
          {["newDoc", "open", "save", "saveAs", "print", "undo"].map((n) => (
            <ToolIcon key={n} name={n} size={13} />
          ))}
          <Caret />
          <ToolIcon name="redo" size={13} />
        </TitleGroup>
        <TitleGroup $w={152} $bg="linear-gradient(90deg, #e4e4e4, #c4c4c4)" $gap={2}>
          <ToolIcon name="gear" w={13} size={13} />
          <WorkspaceSelect aria-label="工作空间">
            <option>自定义</option>
          </WorkspaceSelect>
          <Caret />
          <Caret $c="#000" />
        </TitleGroup>
        <TitleGroup $grow $bg="#fff" $pl={10}>
          <DocTitle>Drawing1.dwg</DocTitle>
        </TitleGroup>
        <TitleGroup>
          <Svg $s={11} viewBox="0 0 11 11">
            <path d="M4 2l4 3.500-4 3.500z" fill="#111" />
          </Svg>
          <SearchBox type="search" placeholder="键入关键字或短语" aria-label="搜索" />
        </TitleGroup>
        <TitleGroup $w={200} $pl={2} $gap={1}>
          <ToolIcon name="binoc" w={18} size={13} />
          <ToolIcon name="user" w={17} size={13} />
          <LoginButton type="button">登录</LoginButton>
          <Caret />
          <ToolIcon name="exchange" w={18} />
          <ToolIcon name="a360" w={18} size={13} />
          <Caret />
          <ToolIcon name="help" w={28} size={14} />
          <Caret />
        </TitleGroup>
        <TitleGroup $w={126} $bg="#fff" $pl={32}>
          <WindowButtons $gap={25}>
            {["M1 7h10", "M1 1h9v9H1z", "M1 1l10 10M11 1L1 11"].map((d) => (
              <IconButton key={d} type="button" $w={12} aria-label="窗口">
                <svg width="12" height="12"><path d={d} fill="none" stroke="#c2c2c2" /></svg>
              </IconButton>
            ))}
          </WindowButtons>
        </TitleGroup>
      </TitleBar>

      <MenuBar>
        <MenuList>
          {menus.map((m) => (
            <MenuEntry key={m}>
              <MenuTop type="button" $open={m === "工具(T)"}>{m}</MenuTop>
              {m === "工具(T)" && (
                <Menu>
                  <Items list={toolsMenu} />
                </Menu>
              )}
            </MenuEntry>
          ))}
        </MenuList>
        <WindowButtons $gap={2}>
          {["M0 6h6", "M0 3h5v4H0zM2 3V1h5v4H5", "M1 1l6 6M7 1L1 7"].map((d) => (
            <IconButton key={d} type="button" $w={8} aria-label="文档窗口">
              <svg width="8" height="8"><path d={d} fill="none" stroke="#1c1c1c" strokeWidth="1.500" /></svg>
            </IconButton>
          ))}
        </WindowButtons>
      </MenuBar>

      <FileTabs>
        <FileTab type="button">Drawing1*</FileTab>
        <AddTab type="button" aria-label="新图形" />
      </FileTabs>

      <Toolbars>
        <ToolRow>
          <Strip $w={784}>
            {["newDoc", "open", "floppy", "print", "zoomWin", "saveAs", "floppy", "layers", "copy", "paste", "pen", "dimStyle"].map((n, i) => (
              <ToolIcon key={i} name={n} />
            ))}
            <ToolIcon name="undo" w={25} />
            <ToolIcon name="redo" w={22} />
            <Caret $c="#999" />
            <Divider />
            <ToolIcon name="hand" />
            <ToolIcon name="zoomWin" />
            <Push />
            <Select w={66} value="Standard" pl={2} />
            <Divider />
            <ToolIcon name="dimStyle" w={20} />
            <Select w={74} value="GC" pl={7} />
            <Divider />
            <ToolIcon name="tableStyle" w={13} />
            <Select w={77} value="Standard" pl={3} />
            <Divider />
            <ToolIcon name="leader" w={15} />
            <Select w={75} value="Standard" pl={12} />
          </Strip>
          <DenseStrip>
            {row1.map((n, i) => (n === "|" ? <Divider key={i} /> : <ToolIcon key={i} name={n} />))}
          </DenseStrip>
        </ToolRow>
        <ToolRow>
          <Strip $w={140} $pl={3}>
            <Select w={109} value="自定义" />
            <ToolIcon name="gear" w={14} />
            <ToolIcon name="layers" w={14} />
          </Strip>
          <Strip $w={616}>
            <ToolIcon name="layers" />
            {["bulb", "sun", "freeze", "lock", "swatch"].map((n) => (
              <ToolIcon key={n} name={n} w={11} size={10} />
            ))}
            <LayerName>0</LayerName>
            <Push />
            <Select w={66} value="ByLayer" monospace />
            <Divider />
            <Select w={101} value="ByLayer" pl={44} monospace line={37} />
            <Divider />
            <Select w={81} value="ByLayer" pl={29} monospace line={23} />
            <Divider />
            <Select w={76} value="ByColor" pl={6} monospace off />
          </Strip>
          <DenseStrip>
            {row2.map((n, i) => (
              <ToolIcon key={i} name={n} />
            ))}
          </DenseStrip>
        </ToolRow>
      </Toolbars>

      <Main>
        <SidePanel>
          <SideHead>天正...</SideHead>
          {sideGroups.map((g, i) => (
            <SideGroup key={i} $line={g.line}>
              {g.items.map(([t, icon]) => (
                <SideItem key={t}>
                  <SideButton type="button">
                    <Icon name={icon} size={9} />
                    <SideLabel $wide={t.length === 3}>{t}</SideLabel>
                  </SideButton>
                </SideItem>
              ))}
            </SideGroup>
          ))}
        </SidePanel>

        <Work>
          <WorkRow>
            <ToolColumn $w={16} $mr={3}>
              <ToolStack>
                {drawTools.map((n, i) => (
                  <ToolIcon key={i} name={n} w={16} h={14} size={11} />
                ))}
                <ToolIcon name="letterA" w={16} h={14} />
                <ToolIcon name="mix" w={16} h={14} />
              </ToolStack>
              <ToolStack>
                <ToolIcon name="bulbB" w={16} h={14} />
                <ToolIcon name="bulbC" w={16} h={14} />
                <ToolIcon name="bulbD" w={16} h={14} />
                <HLine />
                <ToolIcon name="lockG" w={16} h={15} />
                <HLine />
                <ToolIcon name="globe" w={16} h={14} />
                <ToolIcon name="sunDoc" w={16} h={14} />
              </ToolStack>
            </ToolColumn>

            <Viewport>
              <Canvas>
                <Drawing>
                  <defs>
                    <pattern id="grid" x="41" y="47" width="78" height="78" patternUnits="userSpaceOnUse">
                      <path d="M16 0v78M31 0v78M47 0v78M62 0v78M0 16h78M0 31h78M0 47h78M0 62h78" stroke="#0b0b0b" />
                      <path d="M0.500 0v78M0 0.500h78" stroke="#1d1d1d" />
                    </pattern>
                  </defs>
                  <rect width="100%" height="100%" fill="url(#grid)" />
                  <path d="M506 35L825 233 537 412 265 401 315 270z" fill="none" stroke="#f2f2f2" strokeWidth="1.800" />
                  <path d="M130 2h60M161 2v31M158 -1h6v5h-6z" fill="none" stroke="#b8b8b8" />
                  <path d="M12.500 445v29M16 477.500h28M9.500 474.500h6v6h-6z" fill="none" stroke="#a8a8a8" />
                  <path d="M14 434l4 4 4-4M18 438v5M47 468l8 8M55 468l-8 8" fill="none" stroke="#8a8a8a" />
                </Drawing>
                <Compass viewBox="0 0 88 92">
                  <circle cx="44" cy="46" r="34" fill="none" stroke="#303030" strokeWidth="7" />
                  <rect x="28" y="30" width="33" height="33" fill="#b9b9bb" />
                  <path d="M44 38v14M35 52h19M44 46h7" stroke="#55565c" strokeWidth="1.500" />
                  <g fill="#a6a6a6" fontSize="12" fontFamily="Noto Sans CJK SC" textAnchor="middle">
                    <text x="44" y="15">北</text>
                    <text x="8" y="51">西</text>
                    <text x="80" y="51">东</text>
                    <text x="44" y="87">南</text>
                  </g>
                </Compass>
                <WcsButton type="button">WCS</WcsButton>
                <NavBar>
                  <svg width="15" height="115" fill="none" stroke="#363636" strokeWidth="1.300">
                    <circle cx="7.500" cy="10" r="5" />
                    <path d="M3 5h9v11H3zM6 23h3M2 40c0-8 10-8 11-2M3 36v5h5M2 62l11-12M4 52l8 9M6 70h3M7.500 78v14M1 85h13M3 104h9v9H3zM6 107l3 2-3 2z" />
                  </svg>
                </NavBar>
              </Canvas>
              <VScroll>
                <Chevron dir="up" color="#555" />
                <Thumb />
                <Chevron color="#555" />
              </VScroll>
              <LayoutBar>
                <LayoutNav>
                  {["M2 1v7M8 1L4 4.500 8 8z", "M7 1L3 4.500 7 8z", "M2 1l4 3.500L2 8z", "M2 1l4 3.500L2 8zM8 1v7"].map((d) => (
                    <IconButton key={d} type="button" $w={9} $h={12} aria-label="布局">
                      <svg width="9" height="9"><path d={d} fill="#555" stroke="#555" /></svg>
                    </IconButton>
                  ))}
                </LayoutNav>
                <LayoutTab type="button" $on>模型</LayoutTab>
                <LayoutTab type="button">布局1</LayoutTab>/
                <LayoutTab type="button">布局2</LayoutTab>/
                <Push />
                <HScroll>
                  <Chevron dir="left" color="#444" />
                  <Chevron dir="right" color="#444" />
                </HScroll>
              </LayoutBar>
            </Viewport>

            <ToolColumn $w={12} $ml={3}>
              <ToolStack>
                {editTools.map((n, i) => (
                  <ToolIcon key={i} name={n} w={14} h={14} size={12} />
                ))}
              </ToolStack>
              <ToolStack>
                {["order", "orderB", "order", "orderB"].map((n, i) => (
                  <ToolIcon key={i} name={n} w={14} h={14} size={11} />
                ))}
                <HLine />
                <ToolIcon name="dimOrder" w={14} h={14} />
                <ToolIcon name="order" w={14} h={14} size={11} />
              </ToolStack>
            </ToolColumn>
          </WorkRow>

          <CommandDock>
            <DockHandle>
              <Svg $s={8} viewBox="0 0 8 8"><path d="M1 1l6 6M7 1L1 7" stroke="#fff" strokeWidth="1.800" /></Svg>
              <Svg $s={9} viewBox="0 0 9 9"><path d="M8 8L4 4M1 3a3 3 0 014-2L4 4 1 3z" stroke="#fff" fill="#fff" strokeWidth="1.600" /></Svg>
            </DockHandle>
            <CommandPane>
              <History>命令: *取消*</History>
              <Prompt>
                <Svg $s={12} viewBox="0 0 12 12">
                  <path d="M1 2h10v9H1z" fill="#d8dade" stroke="#a6a9ae" />
                  <path d="M3 4l2 2-2 2M6 9h3" fill="none" stroke="#666" />
                </Svg>
                <Caret $c="#999" />
                <PromptInput placeholder="键入命令" aria-label="命令行" />
              </Prompt>
            </CommandPane>
          </CommandDock>
        </Work>
      </Main>

      <StatusBar>测量两点之间或多段线上的距离</StatusBar>

      <Tip>
        <TipLine>小提示</TipLine>
        <TipLine>“工具”–“查询”–</TipLine>
        <TipLine>“距离”</TipLine>
      </Tip>

      <Brand>
        <span>秒d</span>
        <BrandBall viewBox="0 0 17 36">
          <circle cx="9" cy="21" r="10" fill="#222" />
          <circle cx="9" cy="21" r="8" fill="#2f86ee" />
          <path d="M6 16.500l8 4.500-8 4.500z" fill="#fff" />
          <path d="M8 5l4 4 4-4" fill="none" stroke="#222" strokeWidth="5" />
          <path d="M8 5l4 4 4-4" fill="none" stroke="#f7d324" strokeWidth="2.500" />
        </BrandBall>
        <span>ng视频</span>
      </Brand>

      <Badge href="#">
        <svg width="48" height="50" viewBox="0 0 48 50" fill="none" stroke="#d3d4d9" strokeWidth="4">
          <path d="M12 36V7c0-4 3-5 6-4l22 13c7 4 7 12 0 17L22 46c-9 5-19 0-19-9V14c0-3 1-6 3-8" />
          <path d="M12 30v4c0 4 5 5 6 2" />
          <path d="M19 19l9 5.500-9 5.500z" fill="#d3d4d9" stroke="none" />
          <path d="M31 19v10" strokeWidth="2" />
        </svg>
        <BadgeText>
          <BadgeName>
            {[..."溜溜自学"].map((c, i) => (
              <span key={i}>{c}</span>
            ))}
          </BadgeName>
          <BadgeUrl>zixue.3D66.COM</BadgeUrl>
        </BadgeText>
      </Badge>

      <Pointer viewBox="0 0 10 16">
        <path d="M1 1v11l3-2 2 4 2-1-2-4h3z" fill="#fff" stroke="#333" />
      </Pointer>
    </Page>
  );
}
